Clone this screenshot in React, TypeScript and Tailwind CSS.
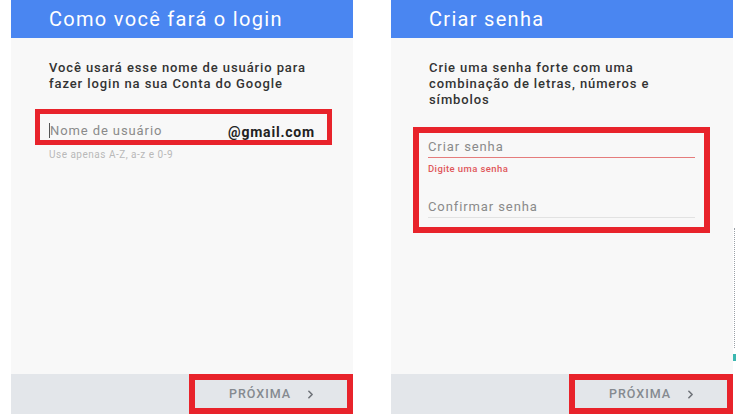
import { ChevronRight } from "lucide-react";

const font = { fontFamily: "Roboto, 'Noto Sans', sans-serif" };

function Footer() {
  return (
    <div className="h-[40px] bg-[#e3e6ea] flex justify-end">
      <div className="w-[164px] h-full border-[6px] border-[#e8232b] flex items-center justify-center gap-[13px] pl-[4px]">
        <span className="text-[12.5px] font-medium tracking-[1px] text-[#858a90]">PRÓXIMA</span>
        <ChevronRight className="w-[13px] h-[13px] text-[#6f747a]" strokeWidth={3} />
      </div>
    </div>
  );
}

function Header({ title }: { title: string }) {
  return (
    <div className="h-[38px] bg-[#4a86f1] flex items-center px-[38px]">
      <h1 className="text-[20px] font-normal text-white tracking-[1.3px] leading-none">{title}</h1>
    </div>
  );
}

function LoginPanel() {
  return (
    <div className="w-[342px] h-full flex flex-col bg-[#f8f8f8]">
      <Header title="Como você fará o login" />
      <div className="flex-1 pt-[22px]">
        <p className="px-[38px] text-[13px] leading-[16px] font-medium text-[#333] tracking-[0.9px]">
          Você usará esse nome de usuário para
          <br />
          fazer login na sua Conta do Google
        </p>
        <div className="ml-[24px] mt-[17px] w-[297px] h-[36px] border-[5px] border-[#e8232b] flex items-center justify-between pl-[9px] pr-[12px] pt-[7px]">
          <div className="flex items-center">
            <span className="w-[1px] h-[15px] bg-[#555]" />
            <span className="text-[13px] text-[#8a8a8a] tracking-[0.9px]">Nome de usuário</span>
          </div>
          <span className="text-[14px] font-bold text-[#222] tracking-[0.8px] mt-[3px]">@gmail.com</span>
        </div>
        <p className="px-[38px] mt-[4px] text-[10px] leading-[12px] text-[#b9b9b9] tracking-[0.5px]">
          Use apenas A-Z, a-z e 0-9
        </p>
      </div>
      <Footer />
    </div>
  );
}

function PasswordPanel() {
  return (
    <div className="w-[342px] h-full flex flex-col bg-[#f8f8f8]">
      <Header title="Criar senha" />
      <div className="flex-1 pt-[22px]">
        <p className="px-[38px] text-[13px] leading-[16px] font-medium text-[#333] tracking-[0.9px]">
          Crie uma senha forte com uma
          <br />
          combinação de letras, números e
          <br />
          símbolos
        </p>
        <div className="ml-[22px] mt-[19px] w-[297px] border-[6px] border-[#e8232b] px-[9px] pt-[6px] pb-[9px]">
          <div className="pb-[2px] border-b-[1.5px] border-[#e57c7c]">
            <span className="block text-[13px] leading-[16px] text-[#8a8a8a] tracking-[0.9px]">Criar senha</span>
          </div>
          <p className="mt-[5px] text-[9.5px] leading-[12px] font-medium text-[#e0575a] tracking-[0.4px]">Digite uma senha</p>
          <div className="mt-[24px] pb-[2px] border-b border-[#e2e2e2]">
            <span className="block text-[13px] leading-[16px] text-[#8a8a8a] tracking-[0.9px]">Confirmar senha</span>
          </div>
        </div>
      </div>
      <Footer />
    </div>
  );
}

export default function App() {
  return (
    <div className="w-[736px] h-[414px] bg-white flex overflow-hidden" style={font}>
      <div className="w-[11px]" />
      <LoginPanel />
      <div className="w-[38px]" />
      <PasswordPanel />
      <div className="w-[3px] flex flex-col items-center pt-[228px]">
        <div className="h-[120px] w-[1px] border-l border-dotted border-[#9aa0a6]" />
        <div className="mt-[6px] w-[3px] h-[7px] bg-[#3bb7b0]" />
      </div>
    </div>
  );
}
